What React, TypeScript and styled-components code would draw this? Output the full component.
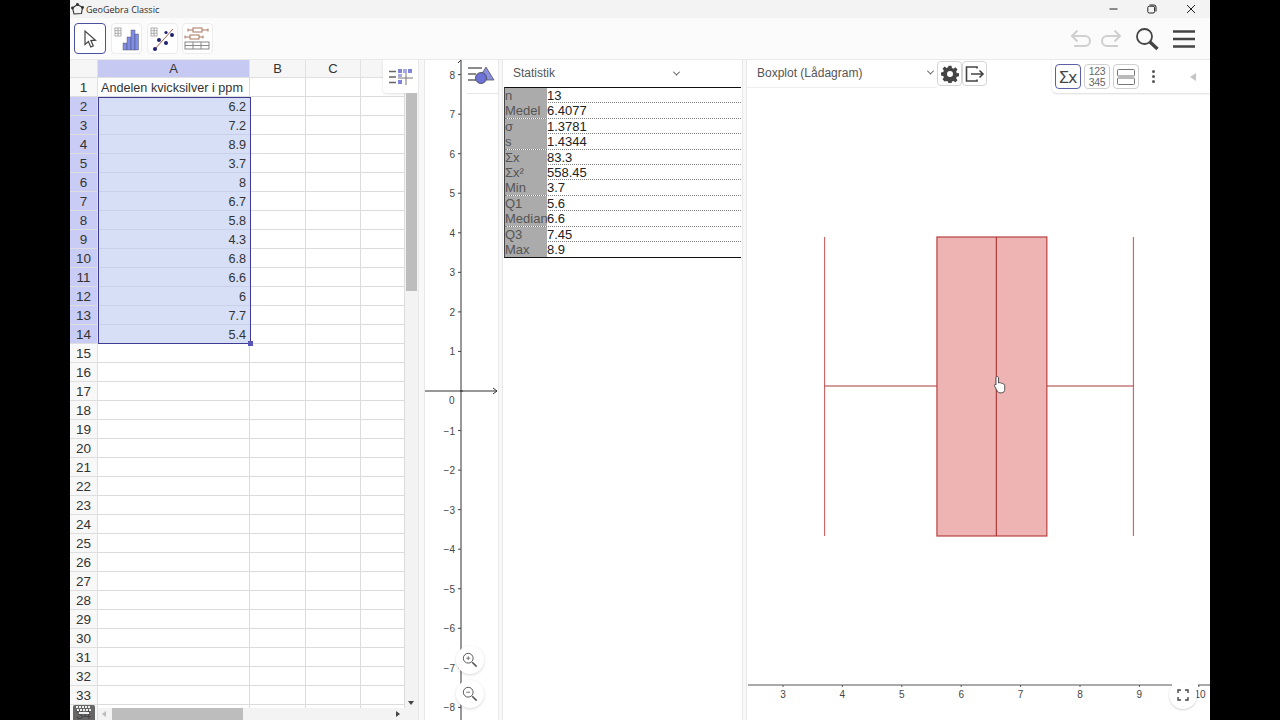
import React from "react";
import styled, { createGlobalStyle } from "styled-components";

const Global = createGlobalStyle`
  html, body { margin: 0; padding: 0; width: 1280px; height: 720px; overflow: hidden; background: #000; }
  * { box-sizing: border-box; }
  #root { width: 1280px; height: 720px; }
`;

const Screen = styled.div`
  width: 1280px; height: 720px; background: #000; padding: 0 70px;
  font-family: "Liberation Sans", Arial, sans-serif;
`;
const Win = styled.div`
  width: 1140px; height: 720px; background: #fff; display: flex; flex-direction: column; overflow: hidden;
`;
const TitleBar = styled.div`
  height: 18px; flex: none; background: #f3f3f3; display: flex; align-items: center; padding-left: 1px;
  font-family: "Open Sans", sans-serif; font-size: 9px; color: #2b2b2b; gap: 2px;
`;
const TitleText = styled.span` flex: 1; `;
const WinBtn = styled.div<{ $w: number }>`
  width: ${p => p.$w}px; height: 18px; display: flex; align-items: center; justify-content: center; flex: none;
`;
const ToolBar = styled.div`
  height: 42px; flex: none; background: #fbfbfb; border-bottom: 1px solid #e9e9e9;
  display: flex; align-items: center; padding: 0 10px 0 4px;
`;
const ModeBtn = styled.div<{ $active?: boolean }>`
  width: ${p => (p.$active ? 32 : 31)}px; height: 31px; border-radius: 4px; background: #fff; flex: none;
  margin-right: ${p => (p.$active ? 5 : 4.5)}px;
  border: ${p => (p.$active ? "1.5px solid #4a4f9f" : "1px solid #ececec")};
  display: flex; align-items: center; justify-content: center;
`;
const Spacer = styled.div` flex: 1; `;
const TopIcon = styled.div<{ $w: number }>`
  width: ${p => p.$w}px; height: 30px; display: flex; align-items: center; justify-content: center; flex: none;
`;
const Main = styled.div` flex: 1; min-height: 0; display: flex; `;
const Divider = styled.div<{ $w: number }>`
  width: ${p => p.$w}px; flex: none; background: #f8f8f8; border-left: 1px solid #e8e8e8; border-right: 1px solid #e8e8e8;
`;

/* spreadsheet */
const SheetPanel = styled.div` width: 348px; flex: none; position: relative; overflow: hidden; background: #fff; `;
const Sheet = styled.div` width: 335px; display: flex; flex-direction: column; `;
const HeadRow = styled.div` display: grid; grid-template-columns: 28px 152px 56px 55px 44px; height: 18px; `;
const ColHead = styled.div<{ $sel?: boolean }>`
  background: ${p => (p.$sel ? "#c6caf2" : "#f6f6f6")}; border-right: 1px solid #e2e2e2; border-bottom: 1px solid #e0e0e0;
  font-size: 13px; color: #333; display: flex; align-items: center; justify-content: center;
`;
const Row = styled.div` display: grid; grid-template-columns: 28px 152px 56px 55px 44px; height: 19px; `;
const RowHead = styled.div<{ $sel?: boolean }>`
  background: ${p => (p.$sel ? "#c9cdf5" : "#f8f8f8")}; border-bottom: 1px solid #dedede; border-right: 1px solid #e0e0e0;
  font-size: 13.5px; color: #333; display: flex; align-items: center; justify-content: center;
`;
const Cell = styled.div<{ $sel?: boolean; $left?: boolean }>`
  background: ${p => (p.$sel ? "#d6dff5" : "#fff")}; border-bottom: 1px solid ${p => (p.$sel ? "#c9d1e8" : "#dcdcdc")};
  border-right: 1px solid #dcdcdc; font-size: 12.65px; color: #333;
  display: flex; align-items: center; justify-content: ${p => (p.$left ? "flex-start" : "flex-end")};
  padding: 1px 3px 0; white-space: nowrap;
`;
const Selection = styled.div`
  position: absolute; left: 28px; top: 37px; width: 153px; height: 247px; border: 1.5px solid #3f3a94; pointer-events: none;
`;
const Handle = styled.div`
  position: absolute; right: -3px; bottom: -3px; width: 5px; height: 5px; background: #5a55b8;
`;
const SheetMenu = styled.div`
  position: absolute; left: 313px; top: 0; width: 35px; height: 33px; background: #fff;
  border-radius: 0 0 0 4px; box-shadow: 0 1px 3px rgba(0,0,0,.12);
  display: flex; align-items: center; justify-content: center;
`;
const VScroll = styled.div`
  position: absolute; left: 335px; top: 33px; width: 13px; height: 615px; background: #f3f3f3;
`;
const VThumb = styled.div` width: 11px; height: 198px; margin-left: 1px; background: #bdbdbd; `;
const DownArrow = styled.div`
  position: absolute; left: 3px; bottom: 3px; width: 0; height: 0;
  border-left: 3.5px solid transparent; border-right: 3.5px solid transparent; border-top: 4px solid #444;
`;
const HScroll = styled.div`
  position: absolute; left: 28px; right: 0; bottom: 0; height: 12px; background: #f3f3f3; display: flex; align-items: center;
`;
const HThumb = styled.div` position: absolute; left: 14px; top: 0; width: 131px; height: 12px; background: #bdbdbd; `;
const ArrowL = styled.div`
  position: absolute; left: 4px; top: 3px; width: 0; height: 0;
  border-top: 3.5px solid transparent; border-bottom: 3.5px solid transparent; border-right: 4px solid #bbb;
`;
const ArrowR = styled.div`
  position: absolute; left: 298px; top: 3px; width: 0; height: 0;
  border-top: 3.5px solid transparent; border-bottom: 3.5px solid transparent; border-left: 4px solid #444;
`;
const KeyboardBtn = styled.div`
  position: absolute; left: 3px; bottom: 0; width: 22px; height: 15px; background: rgba(70,70,70,.82); border-radius: 2px 2px 0 0;
  display: flex; align-items: flex-start; justify-content: center; padding-top: 1px;
`;

/* graphics */
const GraphicsPanel = styled.div` width: 73px; flex: none; position: relative; background: #fff; `;
const Plot = styled.svg` display: block; width: 100%; height: 100%; font-family: "Liberation Sans", Arial, sans-serif; `;
const GraphicsStyle = styled.div`
  position: absolute; left: 42px; top: 0; width: 31px; height: 34px; background: #fff; border-bottom: 1px solid #e6e6e6;
  display: flex; align-items: center; justify-content: flex-start; padding: 0 0 3px 0;
`;
const RoundBtn = styled.div<{ $x: number; $y: number }>`
  position: absolute; left: ${p => p.$x}px; top: ${p => p.$y}px; width: 28px; height: 28px; border-radius: 50%;
  background: #fff; box-shadow: 0 1px 3px rgba(0,0,0,.16); display: flex; align-items: center; justify-content: center;
`;

/* statistics */
const StatPanel = styled.div` width: 239px; flex: none; display: flex; flex-direction: column; background: #fff; `;
const DropRow = styled.div<{ $w: string; $pad: number }>`
  height: 28px; flex: none; width: ${p => p.$w}; display: flex; align-items: center; justify-content: space-between;
  padding: 0 ${p => p.$pad}px 2px 10px; font-size: 12px; color: #555; position: relative;
`;
const Chevron = styled.span`
  width: 5px; height: 5px; border-right: 1px solid #555; border-bottom: 1px solid #555; transform: rotate(45deg) translate(-1px,-1px);
`;
const StatTable = styled.div`
  margin: -1px 1px 0 1px; border-top: 1.5px solid #111; border-bottom: 1.5px solid #111; border-left: 1px solid #444;
`;
const StatRow = styled.div<{ $last?: boolean }>`
  display: grid; grid-template-columns: 42px 1fr; height: ${p => (p.$last ? 15 : 15.4)}px;
  border-bottom: ${p => (p.$last ? "none" : "1px dotted #808080")}; font-size: 13px; line-height: 15px;
`;
const StatLabel = styled.div` background: #ababab; color: #555; white-space: nowrap; `;
const StatValue = styled.div` color: #222; `;

/* box plot */
const BoxPanel = styled.div` flex: 1; min-width: 0; position: relative; display: flex; flex-direction: column; background: #fff; `;
const BoxHeader = styled.div` height: 28px; flex: none; display: flex; align-items: flex-start; `;
const BoxDrop = styled(DropRow)` border-bottom: 1px solid #eee; `;
const SquareBtn = styled.div`
  width: 25px; height: 25px; margin-top: 1px; border: 1px solid #d5d5d5; border-radius: 4px; background: #fff; flex: none;
  display: flex; align-items: center; justify-content: center;
`;
const PlotArea = styled.div` flex: 1; min-height: 0; position: relative; `;
const StyleBar = styled.div`
  position: absolute; right: 0; top: 0; width: 158px; height: 33px; background: #fff; border-radius: 0 0 0 5px;
  box-shadow: 0 1px 2px rgba(0,0,0,.14); display: flex; align-items: center; padding: 0 0 0 3px; gap: 3px;
`;
const StyleBtn = styled.div<{ $active?: boolean }>`
  width: 26px; height: 25px; border-radius: 4px; border: 1px solid ${p => (p.$active ? "#5a5fa8" : "#cfcfcf")};
  background: #fff; display: flex; align-items: center; justify-content: center; flex: none; color: #555;
`;
const SigmaText = styled.span` color: #444; letter-spacing: -0.5px; font-family: "Noto Sans", sans-serif; font-size: 17px; `;
const NumText = styled.span` font-size: 10.5px; line-height: 10.5px; color: #666; text-align: center; letter-spacing: -0.3px; `;
const Dots = styled.div` width: 3px; margin-left: 10px; display: flex; flex-direction: column; gap: 2px; `;
const Dot = styled.div` width: 3px; height: 3px; border-radius: 50%; background: #555; `;
const Collapse = styled.div`
  margin-left: 32px; width: 0; height: 0; border-top: 4px solid transparent; border-bottom: 4px solid transparent; border-right: 6px solid #c4c4c4;
`;
const FullScreen = styled(RoundBtn)` box-shadow: 0 1px 2px rgba(0,0,0,.18); `;

const values = ["6.2","7.2","8.9","3.7","8","6.7","5.8","4.3","6.8","6.6","6","7.7","5.4"];
const stats: [string,string][] = [["n","13"],["Medel","6.4077"],["σ","1.3781"],["s","1.4344"],["Σx","83.3"],["Σx²","558.45"],["Min","3.7"],["Q1","5.6"],["Median","6.6"],["Q3","7.45"],["Max","8.9"]];

const Search = ({ minus }: { minus: boolean }) => (
  <svg width="16" height="16" viewBox="0 0 18 18" fill="none" stroke="#555">
    <circle cx="7" cy="7" r="5.500" strokeWidth="1.1" />
    <path d="M4.800 7h4.400" strokeWidth=".9" />
    {!minus && <path d="M7 4.800v4.400" strokeWidth=".9" />}
    <path d="M11.500 11.500l5 5" strokeWidth="1.800" />
  </svg>
);

export default function App() {
  const ys = [8,7,6,5,4,3,2,1,-1,-2,-3,-4,-5,-6,-7,-8];
  const yOf = (v: number) => 391 - v * 39.55;
  const xOf = (v: number) => 783 + (v - 3) * 59.4;
  const bx = (v: number) => xOf(v) - 0.5;
  return (
    <Screen>
      <Global />
      <Win>
        <TitleBar>
          <svg width="13" height="13" viewBox="0 0 13 13" fill="none" stroke="#333" strokeWidth="1.1">
            <path d="M6.500 1.500 11.500 4.500 10.500 10.500 3 11 1.500 5z" />
            <circle cx="6.500" cy="1.500" r=".9" fill="#333"/><circle cx="11.500" cy="4.500" r=".9" fill="#333"/><circle cx="1.500" cy="5" r=".9" fill="#333"/>
          </svg>
          <TitleText>GeoGebra Classic</TitleText>
          <WinBtn $w={36}><svg width="10" height="10" viewBox="0 0 10 10"><path d="M0.500 5h8" stroke="#222" /></svg></WinBtn>
          <WinBtn $w={36}><svg width="10" height="10" viewBox="0 0 10 10" fill="none" stroke="#222"><rect x=".8" y="2.200" width="6.800" height="6.800" rx="1.500"/><path d="M2.500 1h4.500a2 2 0 0 1 2 2v4.500"/></svg></WinBtn>
          <WinBtn $w={38}><svg width="10" height="10" viewBox="0 0 10 10" stroke="#222"><path d="M1 1l8 8M9 1l-8 8" /></svg></WinBtn>
        </TitleBar>
        <ToolBar>
          <ModeBtn $active>
            <svg width="18" height="22" viewBox="0 0 18 22" fill="#fff" stroke="#444" strokeWidth="1.200"><path d="M4 3v13.500l3.400-3 2.300 5.500 2.600-1.100-2.400-5.300 4.600-.4z"/></svg>
          </ModeBtn>
          <ModeBtn>
            <svg width="27" height="26" viewBox="0 0 27 26">
              <g fill="none" stroke="#999" strokeWidth=".8"><rect x="2" y="2" width="6" height="8"/><path d="M2 4.700h6M2 7.300h6M5 2v8"/></g>
              <g fill="#7f8ee8" stroke="#445" strokeWidth=".4"><rect x="10" y="17" width="4" height="7"/><rect x="14" y="11" width="4" height="13"/><rect x="18" y="4" width="4" height="20"/><rect x="22" y="8" width="3.500" height="16"/></g>
            </svg>
          </ModeBtn>
          <ModeBtn>
            <svg width="27" height="26" viewBox="0 0 27 26">
              <g fill="none" stroke="#999" strokeWidth=".8"><rect x="2" y="2" width="6" height="8"/><path d="M2 4.700h6M2 7.300h6M5 2v8"/></g>
              <path d="M5 24 L24 3" stroke="#a0604f" strokeWidth="1"/>
              <g fill="#1d2170"><circle cx="6" cy="23" r="2"/><circle cx="10" cy="14" r="2"/><circle cx="17" cy="17" r="2"/><circle cx="23" cy="9" r="2"/><circle cx="17" cy="6.500" r="1.600"/></g>
            </svg>
          </ModeBtn>
          <ModeBtn>
            <svg width="27" height="24" viewBox="0 0 27 24" fill="none" strokeWidth="1">
              <g stroke="#a9765e"><path d="M4 3h20M4 1.500v3M24 1.500v3M1 10h18M1 8.500v3M19 8.500v3"/><rect x="9" y="1" width="9" height="4" fill="#fff"/><rect x="6" y="8" width="9" height="4" fill="#fff"/></g>
              <g stroke="#888"><rect x="1" y="15" width="24" height="7"/><path d="M1 18.500h24M9 15v7M17 15v7"/></g>
            </svg>
          </ModeBtn>
          <Spacer />
          <TopIcon $w={30}>
            <svg width="24" height="20" viewBox="0 0 24 20" fill="none" stroke="#cfcfcf" strokeWidth="2"><path d="M3 7h13a5 5 0 0 1 0 10H5"/><path d="M8.500 1.500 3 7l5.500 5.500" /></svg>
          </TopIcon>
          <TopIcon $w={30}>
            <svg width="24" height="20" viewBox="0 0 24 20" fill="none" stroke="#cfcfcf" strokeWidth="2"><path d="M21 7H8a5 5 0 0 0 0 10h11"/><path d="M15.500 1.500 21 7l-5.500 5.500" /></svg>
          </TopIcon>
          <TopIcon $w={42}>
            <svg width="24" height="24" viewBox="0 0 24 24" fill="none" stroke="#444"><circle cx="9.500" cy="9.500" r="7.500" strokeWidth="1.800"/><path d="M15 15l7.500 7" strokeWidth="3.400"/></svg>
          </TopIcon>
          <TopIcon $w={32}>
            <svg width="24" height="20" viewBox="0 0 24 20" stroke="#444" strokeWidth="2.400"><path d="M1 2.500h22M1 10h22M1 17.500h22"/></svg>
          </TopIcon>
        </ToolBar>
        <Main>
          <SheetPanel>
            <Sheet>
              <HeadRow>
                <ColHead />
                <ColHead $sel>A</ColHead>
                <ColHead>B</ColHead>
                <ColHead>C</ColHead>
                <ColHead />
              </HeadRow>
              {Array.from({ length: 34 }, (_, i) => {
                const n = i + 1;
                const sel = n >= 2 && n <= 14;
                return (
                  <Row key={n}>
                    <RowHead $sel={sel}>{n}</RowHead>
                    <Cell $sel={sel} $left={n === 1}>{n === 1 ? "Andelen kvicksilver i ppm" : sel ? values[n - 2] : ""}</Cell>
                    <Cell /><Cell /><Cell />
                  </Row>
                );
              })}
            </Sheet>
            <Selection><Handle /></Selection>
            <SheetMenu>
              <svg width="26" height="20" viewBox="0 0 26 20">
                <path d="M1 4.500h7M1 10h7M1 15.500h7" stroke="#666" strokeWidth="1.400"/>
                <path d="M18 4v14M10 11h15" stroke="#777" strokeWidth="1"/>
                <g fill="#7f86d8"><rect x="10" y="2" width="4" height="4"/><rect x="15" y="2" width="4" height="4" fill="#a5a9e6"/><rect x="20" y="2" width="4" height="4"/><rect x="10" y="7" width="4" height="3" fill="#a5a9e6"/><rect x="10" y="13" width="4" height="4"/></g>
              </svg>
            </SheetMenu>
            <VScroll><VThumb /><DownArrow /></VScroll>
            <HScroll><ArrowL /><HThumb /><ArrowR /></HScroll>
            <KeyboardBtn>
              <svg width="18" height="8" viewBox="0 0 18 8" fill="#eee"><path d="M1 0h2v2H1zM4 0h2v2H4zM7 0h2v2H7zM10 0h2v2h-2zM13 0h2v2h-2zM2 3h2v2H2zM5 3h2v2H5zM8 3h2v2H8zM11 3h2v2h-2zM14 3h2v2h-2zM4 6h10v2H4z"/></svg>
            </KeyboardBtn>
          </SheetPanel>
          <Divider $w={7} />
          <GraphicsPanel>
            <Plot viewBox="425 60 73 660">
              <path d="M461 60V720" stroke="#333" strokeWidth="1" />
              <path d="M458 63l3-3" stroke="#333" fill="none" />
              <path d="M425 391H497M493 388l4 3-4 3" stroke="#333" strokeWidth="1" fill="none" />
              {ys.map(v => (
                <g key={v}>
                  <path d={`M458 ${yOf(v)}h3`} stroke="#444" />
                  <text x="455" y={yOf(v) + 4} fontSize="10" fill="#444" textAnchor="end">{v < 0 ? `\u2212${-v}` : v}</text>
                </g>
              ))}
              <text x="449" y="404" fontSize="10" fill="#444">0</text>
              <path d="M460 391h3" stroke="#333" />
            </Plot>
            <GraphicsStyle>
              <svg width="28" height="20" viewBox="0 0 28 20">
                <path d="M1 3h14M1 9h8M1 15h8" stroke="#666" strokeWidth="1.500"/>
                <path d="M19 2l8 13H11z" fill="#8a8fe0" stroke="#555" strokeWidth=".8"/>
                <circle cx="14" cy="13" r="5.500" fill="#6c72d8" stroke="#444" strokeWidth=".8"/>
              </svg>
            </GraphicsStyle>
            <RoundBtn $x={31} $y={586}><Search minus={false} /></RoundBtn>
            <RoundBtn $x={31} $y={620}><Search minus /></RoundBtn>
          </GraphicsPanel>
          <Divider $w={5} />
          <StatPanel>
            <DropRow $w="100%" $pad={63}>Statistik<Chevron /></DropRow>
            <StatTable>
              {stats.map(([k, v], i) => (
                <StatRow key={k} $last={i === stats.length - 1}>
                  <StatLabel>{k}</StatLabel>
                  <StatValue>{v}</StatValue>
                </StatRow>
              ))}
            </StatTable>
          </StatPanel>
          <Divider $w={5} />
          <BoxPanel>
            <BoxHeader>
              <BoxDrop $w="190px" $pad={4}>Boxplot (Lådagram)<Chevron /></BoxDrop>
              <SquareBtn>
                <svg width="18" height="18" viewBox="0 0 24 24" fill="#444"><path fillRule="evenodd" d="M10 1h4l.6 3.100 2 .8 2.600-1.800 2.800 2.800-1.800 2.600.8 2 3 .5v4l-3 .6-.8 2 1.800 2.600-2.800 2.800-2.600-1.800-2 .8-.6 3h-4l-.6-3-2-.8L4.800 21.900 2 19.100l1.800-2.600-.8-2-3-.6v-4l3-.5.8-2L2 4.900 4.800 2.100l2.600 1.800 2-.8zM12 8a4 4 0 1 0 0 8 4 4 0 0 0 0-8z"/></svg>
              </SquareBtn>
              <SquareBtn>
                <svg width="20" height="16" viewBox="0 0 20 16" fill="none" stroke="#444" strokeWidth="1.600"><path d="M12 2.500V1H1.500v14H12v-1.500"/><path d="M6 8h12M14.500 4.500 18 8l-3.500 3.500"/></svg>
              </SquareBtn>
            </BoxHeader>
            <PlotArea>
              <Plot viewBox="747 88 463 632">
                <path d={`M${xOf(3.7)} 237V536M${xOf(8.9)} 237V536`} stroke="#c56a6a" strokeWidth="1.200" />
                <path d={`M${xOf(3.7)} 386H${bx(5.6)}M${bx(7.45)} 386H${xOf(8.9)}`} stroke="#a83a3a" strokeWidth="1" />
                <rect x={bx(5.6)} y="237" width={bx(7.45) - bx(5.6)} height="299" fill="#eeb3b3" stroke="#b84040" strokeWidth="1.200" />
                <path d={`M${bx(6.6)} 237V536`} stroke="#a83030" strokeWidth="1.100" />
                <path d="M748 685H1172M1198 685H1210" stroke="#555" strokeWidth="1" />
                {[3,4,5,6,7,8,9,10].map(v => (
                  <g key={v}>
                    <path d={`M${xOf(v)} 685v2`} stroke="#555" />
                    <text x={v === 10 ? 1200 : xOf(v)} y="698" fontSize="10" fill="#444" textAnchor="middle">{v}</text>
                  </g>
                ))}
                <g transform="translate(994 376)">
                  <path d="M3 0.500c1 0 1.500.5 1.500 1.500v5l1-.3c1-.2 1.500.2 1.700.7 1-.3 1.600 0 1.800.7 1-.2 1.700.2 1.700 1.200v4c0 2-1 3.500-3 3.500H6c-1.500 0-2.500-1-3.500-3L.5 9.800c-.5-1 .5-1.800 1.300-1L2 9V2c0-1 .3-1.500 1-1.500z" fill="#fff" stroke="#333" strokeWidth=".8"/>
                </g>
              </Plot>
              <FullScreen $x={422} $y={593}>
                <svg width="12" height="12" viewBox="0 0 12 12" fill="none" stroke="#444" strokeWidth="1.400"><path d="M1 4V1h3M8 1h3v3M11 8v3H8M4 11H1V8"/></svg>
              </FullScreen>
            </PlotArea>
            <StyleBar>
              <StyleBtn $active><SigmaText>Σx</SigmaText></StyleBtn>
              <StyleBtn><NumText>123<br />345</NumText></StyleBtn>
              <StyleBtn>
                <svg width="20" height="18" viewBox="0 0 20 18" fill="none" stroke="#777" strokeWidth="1"><rect x="1.500" y="1.500" width="17" height="6.500" rx=".8"/><rect x="1.500" y="10" width="17" height="6.500" rx=".8"/></svg>
              </StyleBtn>
              <Dots><Dot /><Dot /><Dot /></Dots>
              <Collapse />
            </StyleBar>
          </BoxPanel>
        </Main>
      </Win>
    </Screen>
  );
}
